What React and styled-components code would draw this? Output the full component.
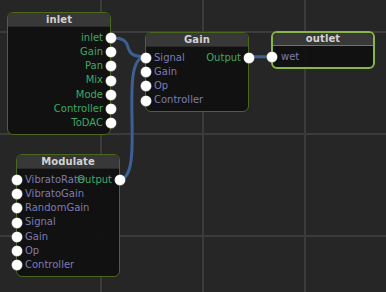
import styled, { createGlobalStyle } from "styled-components"

const Global = createGlobalStyle`
    html, body {
        margin: 0;
        padding: 0;
        background: #262626;
    }
`

const nodes = [
    {
        title: "inlet", x: 7, y: 12,
        inputs: [],
        outputs: ["inlet", "Gain", "Pan", "Mix", "Mode", "Controller", "ToDAC"],
    },
    {
        title: "Gain", x: 145, y: 32,
        inputs: ["Signal", "Gain", "Op", "Controller"],
        outputs: ["Output"],
    },
    {
        title: "outlet", x: 271, y: 31, selected: true,
        inputs: ["wet"],
        outputs: [],
    },
    {
        title: "Modulate", x: 16, y: 154,
        inputs: ["VibratoRate", "VibratoGain", "RandomGain", "Signal", "Gain", "Op", "Controller"],
        outputs: ["Output"],
    },
]

function App () {
    return (
        <Canvas>
            <Global />
            <Wires width="386" height="292">
                <path d="M110.5,37.7 C140,37.7 116,56.7 145.5,56.7" />
                <path d="M118.5,180 C148,180 116,56.7 145.5,56.7" />
                <path d="M248.5,56.7 L271.5,56.7" />
            </Wires>
            {nodes.map(n => {
                const count = Math.max(n.inputs.length, n.outputs.length)
                const rows = []
                for (let i = 0; i < count; i++) {
                    rows.push(
                        <Row key={i}>
                            {n.inputs[i] && <>
                                <Port $side="left" $selected={n.selected} />
                                <InLabel>{n.inputs[i]}</InLabel>
                            </>}
                            {n.outputs[i] && <>
                                <OutLabel>{n.outputs[i]}</OutLabel>
                                <Port $side="right" />
                            </>}
                        </Row>
                    )
                }
                return (
                    <Node key={n.title} $x={n.x} $y={n.y} $selected={n.selected}>
                        <Header $selected={n.selected}>{n.title}</Header>
                        <Body>{rows}</Body>
                    </Node>
                )
            })}
        </Canvas>
    )
}

const Canvas = styled.div`
    position: relative;
    width: 386px;
    height: 292px;
    overflow: hidden;
    background-color: #262626;
    background-image:
        linear-gradient(to right, #3b3b3b 2px, transparent 2px),
        linear-gradient(to bottom, #3b3b3b 2px, transparent 2px);
    background-size: 102px 102px;
    background-position: 100px 0, 0 31px;
    font-family: "DejaVu Sans", Verdana, sans-serif;
    font-size: 10px;
`

const Wires = styled.svg`
    position: absolute;
    left: 0;
    top: 0;

    path {
        fill: none;
        stroke: #3c5f96;
        stroke-width: 3;
        stroke-linecap: round;
    }
`

const Node = styled.div`
    position: absolute;
    left: ${p => p.$x}px;
    top: ${p => p.$y}px;
    width: 104px;
    box-sizing: border-box;
    border: ${p => p.$selected ? "2px solid #8ab548" : "1px solid #4a681c"};
    border-radius: 6px;
    background: rgba(16, 16, 16, 0.94);
`

const Header = styled.div`
    height: ${p => p.$selected ? 12 : 13}px;
    line-height: ${p => p.$selected ? 12 : 13}px;
    border-bottom: 1px solid ${p => p.$selected ? "#5f8a2c" : "#2a2a2a"};
    border-radius: 5px 5px 0 0;
    background: #383838;
    color: #d2d2d2;
    text-align: center;
    font-weight: 600;
    letter-spacing: 0.1px;
`

const Body = styled.div`
    padding: 3.5px 0 3px;
`

const Row = styled.div`
    position: relative;
    display: grid;
    height: 14.3px;
    line-height: 14.3px;
    white-space: nowrap;
`

const InLabel = styled.span`
    grid-area: 1 / 1;
    justify-self: start;
    padding-left: 8px;
    color: #7d7bb0;
`

const OutLabel = styled.span`
    grid-area: 1 / 1;
    justify-self: end;
    padding-right: 7px;
    color: #3fa864;
`

const Port = styled.span`
    position: absolute;
    top: 2.15px;
    ${p => p.$side === "left" ? `left: ${p.$selected ? -6.5 : -5.5}px;` : "right: -5.5px;"}
    width: 10px;
    height: 10px;
    border-radius: 50%;
    background: #ffffff;
    box-shadow: 0 0 0 0.5px #bbb;
`

export default App
